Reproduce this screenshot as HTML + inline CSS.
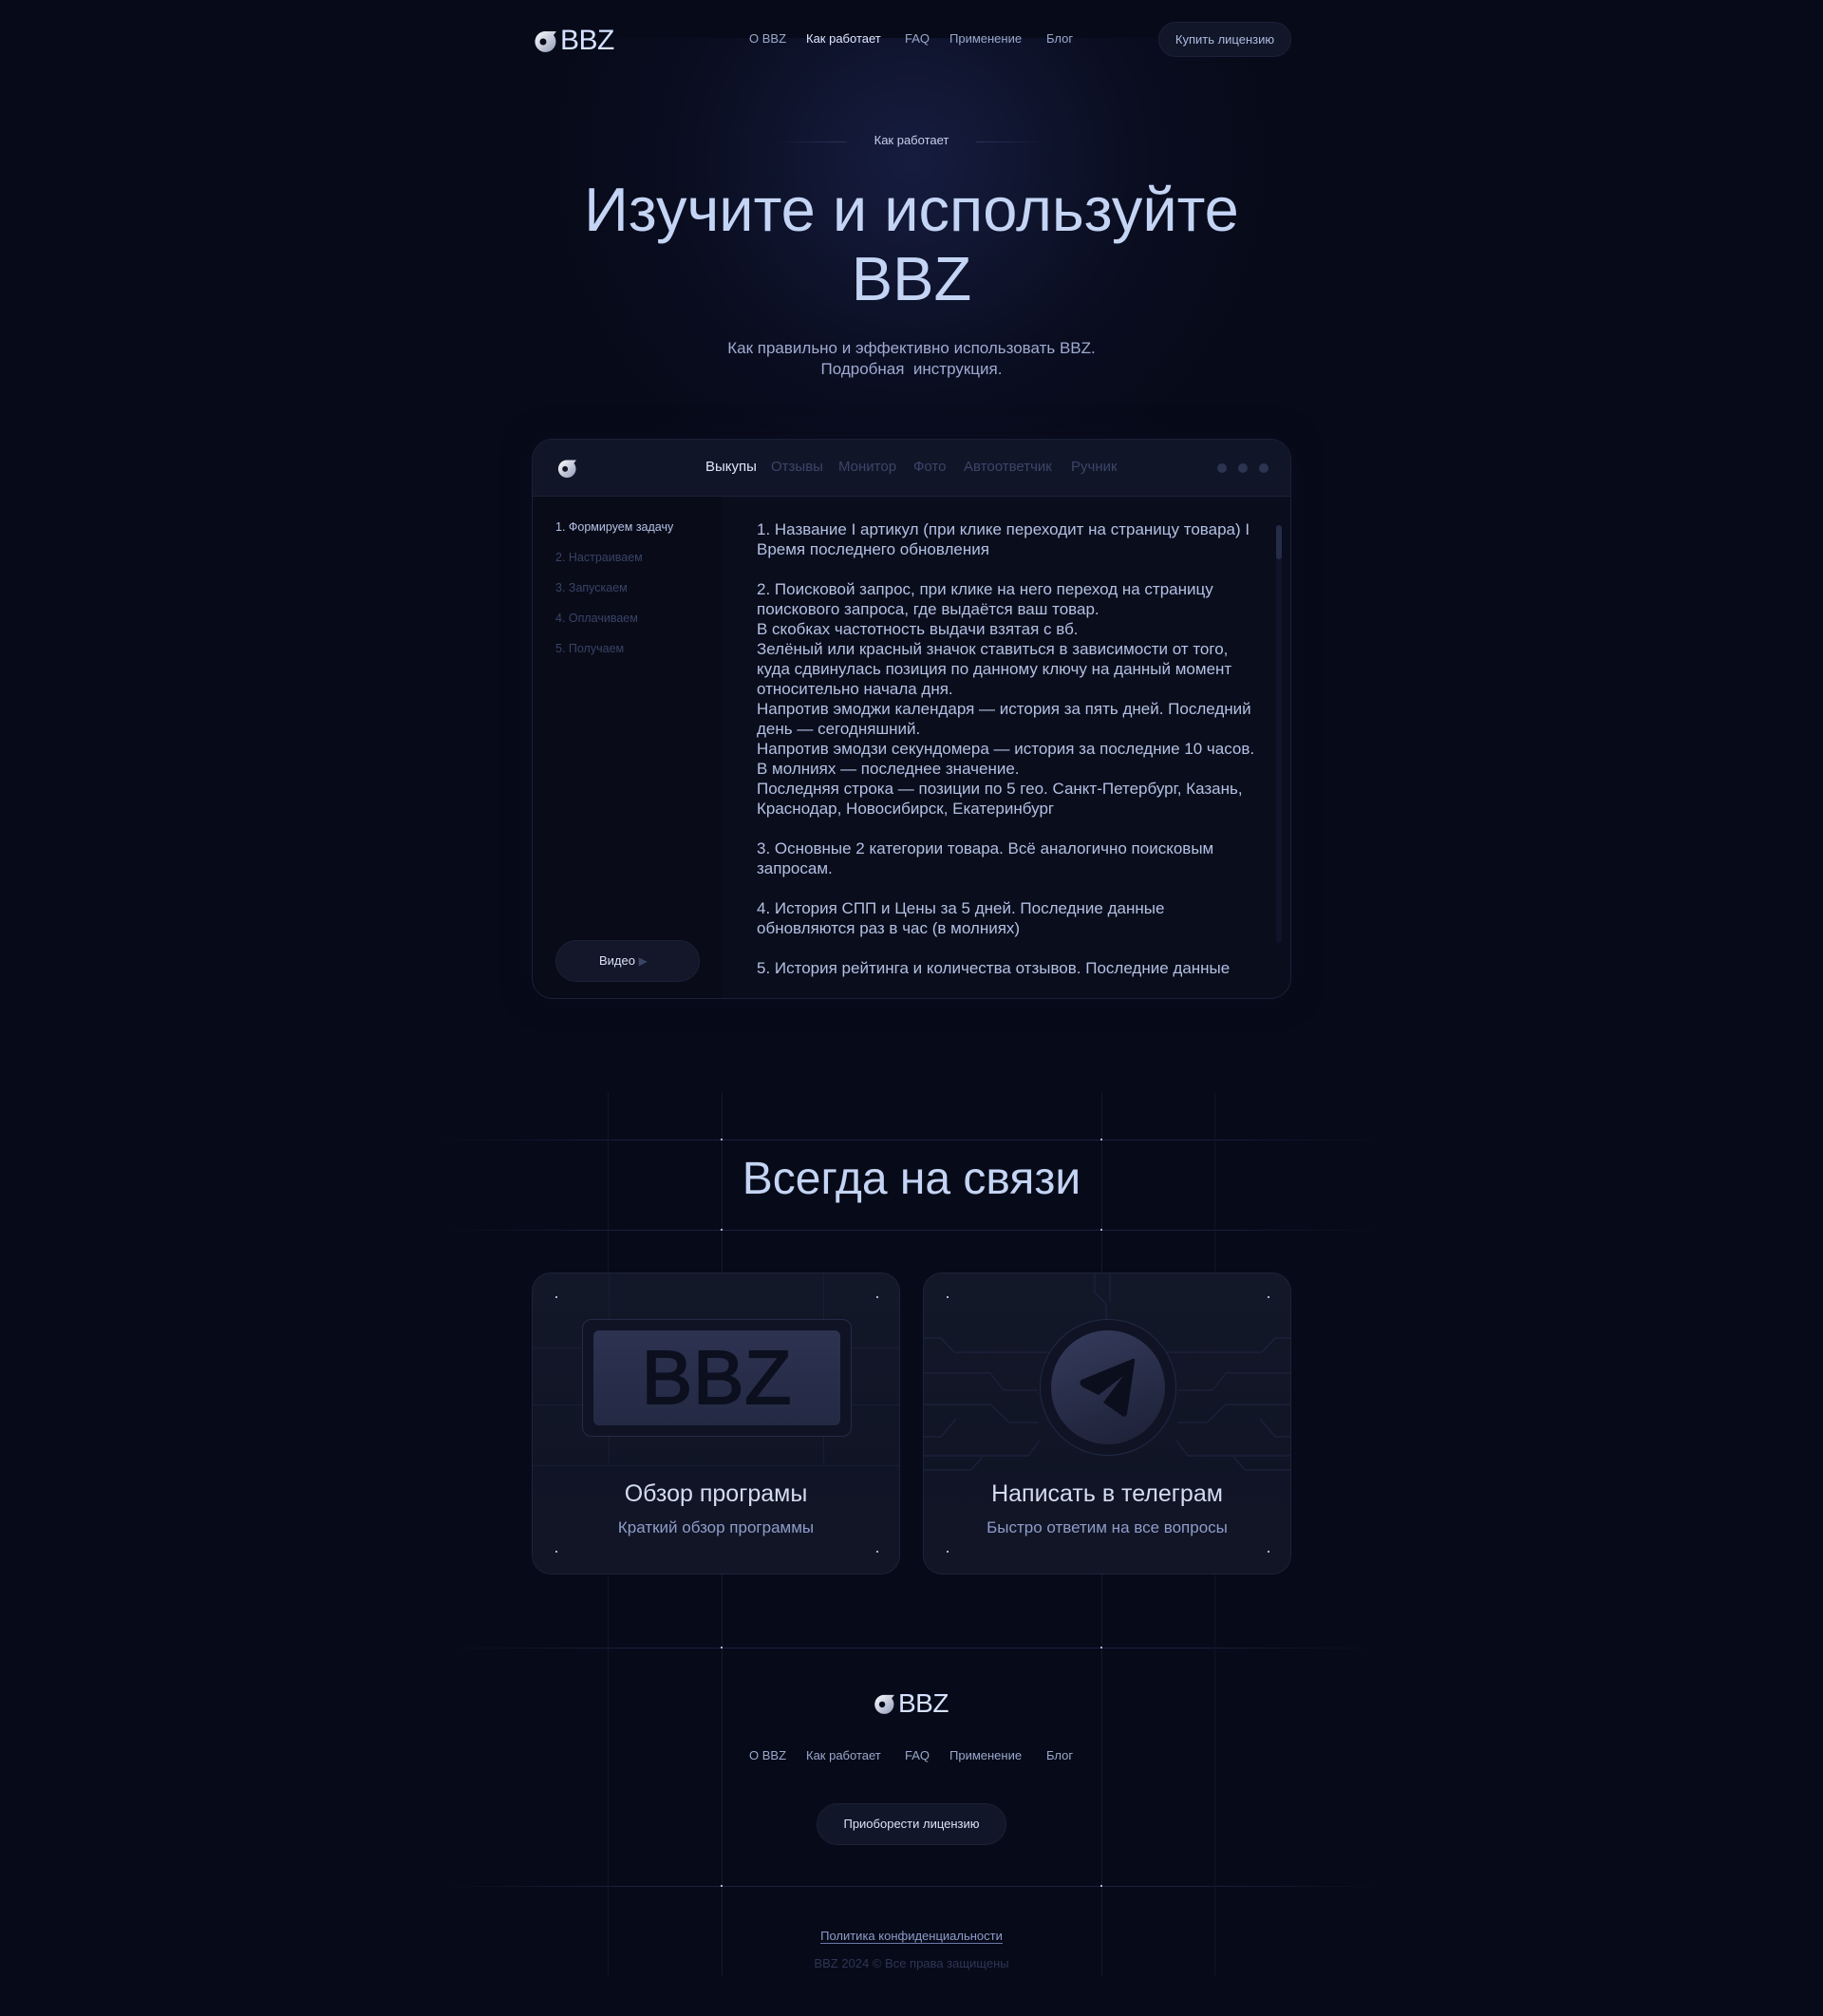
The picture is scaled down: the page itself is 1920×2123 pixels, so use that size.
<!DOCTYPE html>
<html><head><meta charset="utf-8">
<style>
*{margin:0;padding:0;box-sizing:border-box}
html,body{width:1920px;height:2123px;overflow:hidden}
body{background:#070a18;font-family:"Liberation Sans",sans-serif;position:relative;color:#c6d3f0}
.a{position:absolute}
.glow{left:560px;top:40px;width:800px;height:520px;background:radial-gradient(ellipse at 50% 25%,rgba(40,50,110,.45),rgba(20,25,60,.2) 45%,transparent 70%)}
.nav{font-size:13px;color:#9aa8cc;top:33px}
.logo{display:flex;align-items:center;gap:4px}
.logo span{font-size:30px;color:#d6e2ff;letter-spacing:-0.5px}
.hl{height:1px;background:#1a2140}
.vl{width:1px;background:#141a33}
.dot{width:2px;height:2px;background:#aab4d0}
.win{left:560px;top:462px;width:800px;height:590px;border-radius:22px;background:#0a0d1c;border:1px solid #1b2036;overflow:hidden;box-shadow:0 0 30px rgba(10,14,34,.6)}
.wh{height:60px;background:#111528;border-bottom:1px solid #1c2138}
.side{top:60px;left:0;width:200px;bottom:0;background:#090b18}
.txt{left:236px;top:84px;width:532px;font-size:17px;line-height:21px;color:#b2c0e2}
.card{width:388px;height:318px;border-radius:20px;background:linear-gradient(#131829,#0f1324);border:1px solid #1c2238;overflow:hidden}
.ct{font-size:25px;color:#d4dcf2;width:100%;text-align:center}
.cs{font-size:17px;color:#8e9cc8;width:100%;text-align:center}
.cl{position:absolute;height:1px;background:#1c2340}
</style></head><body>
<div class="a glow"></div>

<div class="a logo" style="left:560px;top:26px">
<svg width="26" height="24" viewBox="0 0 26 24"><defs><linearGradient id="g" x1="0" y1="0" x2="1" y2="1"><stop offset="0" stop-color="#ffffff"/><stop offset="1" stop-color="#8f9ab8"/></linearGradient></defs><path d="M13 2H26L23 6A11 11 0 1 1 13 2Z" fill="url(#g)"/><circle cx="12" cy="13" r="3.5" fill="#070a18"/></svg>
<span>BBZ</span></div>
<div class="a nav" style="left:789px">О BBZ</div>
<div class="a nav" style="left:849px;color:#e0e8ff">Как работает</div>
<div class="a nav" style="left:953px">FAQ</div>
<div class="a nav" style="left:1000px">Применение</div>
<div class="a nav" style="left:1102px">Блог</div>
<div class="a" style="left:1220px;top:23px;width:140px;height:37px;border-radius:19px;background:#111628;border:1px solid #1b2138;font-size:13px;color:#aebbe0;text-align:center;line-height:35px">Купить лицензию</div>

<div class="a hl" style="left:815px;top:149px;width:77px;background:linear-gradient(90deg,transparent,#2a3358)"></div>
<div class="a hl" style="left:1028px;top:149px;width:75px;background:linear-gradient(90deg,#2a3358,transparent)"></div>
<div class="a" style="left:860px;top:140px;width:200px;text-align:center;font-size:13px;color:#c6d0ea">Как работает</div>
<div class="a" style="left:460px;top:184px;width:1000px;text-align:center;font-size:65px;line-height:73px;color:#c4d4f4;font-weight:300">Изучите и используйте<br>BBZ</div>
<div class="a" style="left:560px;top:356px;width:800px;text-align:center;font-size:17px;line-height:22px;color:#9eaad0">Как правильно и эффективно использовать BBZ.<br>Подробная&nbsp; инструкция.</div>

<div class="a win">
<div class="wh"></div>
<svg class="a" style="left:24px;top:19px" width="22" height="22" viewBox="0 0 26 24"><path d="M13 2H26L23 6A11 11 0 1 1 13 2Z" fill="url(#g)"/><circle cx="12" cy="13" r="3.5" fill="#111528"/></svg>
<div class="a" style="left:182px;top:20px;font-size:15px;color:#dfe6fa">Выкупы</div>
<div class="a" style="left:251px;top:20px;font-size:15px;color:#3b4568">Отзывы</div>
<div class="a" style="left:322px;top:20px;font-size:15px;color:#3b4568">Монитор</div>
<div class="a" style="left:401px;top:20px;font-size:15px;color:#3b4568">Фото</div>
<div class="a" style="left:454px;top:20px;font-size:15px;color:#3b4568">Автоответчик</div>
<div class="a" style="left:567px;top:20px;font-size:15px;color:#3b4568">Ручник</div>
<div class="a" style="left:721px;top:25px;width:10px;height:10px;border-radius:50%;background:#2c3452"></div>
<div class="a" style="left:743px;top:25px;width:10px;height:10px;border-radius:50%;background:#2c3452"></div>
<div class="a" style="left:765px;top:25px;width:10px;height:10px;border-radius:50%;background:#2c3452"></div>
<div class="a side">
<div class="a" style="left:24px;top:25px;font-size:12.5px;color:#b4c2e6">1. Формируем задачу</div>
<div class="a" style="left:24px;top:57px;font-size:12.5px;color:#384366">2. Настраиваем</div>
<div class="a" style="left:24px;top:89px;font-size:12.5px;color:#384366">3. Запускаем</div>
<div class="a" style="left:24px;top:121px;font-size:12.5px;color:#384366">4. Оплачиваем</div>
<div class="a" style="left:24px;top:153px;font-size:12.5px;color:#384366">5. Получаем</div>
<div class="a" style="left:24px;top:467px;width:152px;height:44px;border-radius:22px;background:#131729;border:1px solid #1b2036;font-size:13px;color:#dbe3f8;line-height:42px;padding-left:45px">Видео <span style="color:#3a4466;font-size:12px">&#9654;</span></div>
</div>
<div class="a txt">1. Название I артикул (при клике переходит на страницу товара) I Время последнего обновления<br><br>2. Поисковой запрос, при клике на него переход на страницу поискового запроса, где выдаётся ваш товар.<br>В скобках частотность выдачи взятая с вб.<br>Зелёный или красный значок ставиться в зависимости от того, куда сдвинулась позиция по данному ключу на данный момент относительно начала дня.<br>Напротив эмоджи календаря — история за пять дней. Последний день — сегодняшний.<br>Напротив эмодзи секундомера — история за последние 10 часов. В молниях — последнее значение.<br>Последняя строка — позиции по 5 гео. Санкт-Петербург, Казань, Краснодар, Новосибирск, Екатеринбург<br><br>3. Основные 2 категории товара. Всё аналогично поисковым запросам.<br><br>4. История СПП и Цены за 5 дней. Последние данные обновляются раз в час (в молниях)<br><br>5. История рейтинга и количества отзывов. Последние данные</div>
<div class="a" style="left:783px;top:90px;width:6px;height:440px;border-radius:3px;background:#10142a"></div>
<div class="a" style="left:783px;top:90px;width:6px;height:36px;border-radius:3px;background:#252c48"></div>
</div>

<div class="a hl" style="left:460px;top:1200px;width:1000px;background:linear-gradient(90deg,transparent,#1a2140 20%,#1a2140 80%,transparent)"></div>
<div class="a hl" style="left:460px;top:1295px;width:1000px;background:linear-gradient(90deg,transparent,#1a2140 20%,#1a2140 80%,transparent)"></div>
<div class="a hl" style="left:460px;top:1735px;width:1000px;background:linear-gradient(90deg,transparent,#1a2140 20%,#1a2140 80%,transparent)"></div>
<div class="a hl" style="left:460px;top:1986px;width:1000px;background:linear-gradient(90deg,transparent,#1a2140 20%,#1a2140 80%,transparent)"></div>
<div class="a vl" style="left:760px;top:1150px;height:930px"></div>
<div class="a vl" style="left:1160px;top:1150px;height:930px"></div>
<div class="a vl" style="left:640px;top:1150px;height:930px;background:#10152a"></div>
<div class="a vl" style="left:1279px;top:1150px;height:930px;background:#10152a"></div>
<div class="a dot" style="left:759px;top:1199px"></div><div class="a dot" style="left:1159px;top:1199px"></div>
<div class="a dot" style="left:759px;top:1294px"></div><div class="a dot" style="left:1159px;top:1294px"></div>
<div class="a dot" style="left:759px;top:1734px"></div><div class="a dot" style="left:1159px;top:1734px"></div>
<div class="a dot" style="left:759px;top:1985px"></div><div class="a dot" style="left:1159px;top:1985px"></div>

<div class="a" style="left:560px;top:1214px;width:800px;text-align:center;font-size:48px;color:#c4d4f4;font-weight:300">Всегда на связи</div>

<div class="a card" style="left:560px;top:1340px">
<div class="cl" style="left:0;top:78px;width:388px;background:#181e34"></div>
<div class="cl" style="left:0;top:138px;width:388px;background:#181e34"></div>
<div class="cl" style="left:0;top:202px;width:388px;background:#181e34"></div>
<div class="a" style="left:80px;top:0;width:1px;height:200px;background:#181e34"></div>
<div class="a" style="left:306px;top:0;width:1px;height:200px;background:#181e34"></div>
<div class="a" style="left:52px;top:48px;width:284px;height:124px;border-radius:10px;background:#0f1324;border:1px solid #242b46"></div>
<div class="a" style="left:64px;top:60px;width:260px;height:100px;border-radius:6px;background:linear-gradient(#2c3250,#242a44);font-size:80px;color:#0c0f1e;text-align:center;line-height:100px;letter-spacing:1px;-webkit-text-stroke:2px #0c0f1e">BBZ</div>
<div class="a" style="left:0;top:200px;width:388px;height:118px;background:linear-gradient(rgba(15,19,36,0),#111526 40%)"></div>
<div class="a ct" style="top:218px">Обзор програмы</div>
<div class="a cs" style="top:258px">Краткий обзор программы</div>
<div class="a dot" style="left:24px;top:24px"></div><div class="a dot" style="left:362px;top:24px"></div>
<div class="a dot" style="left:24px;top:292px"></div><div class="a dot" style="left:362px;top:292px"></div>
</div>

<div class="a card" style="left:972px;top:1340px">
<svg class="a" style="left:0;top:0" width="388" height="318" viewBox="0 0 388 318" fill="none" stroke="#1e2542" stroke-width="1">
<path d="M0 68H18L32 83H140"/><path d="M0 105H70L84 123H120"/><path d="M0 138H70L90 157H120"/><path d="M0 172H18L34 153"/><path d="M0 192H110L122 176"/><path d="M0 207H50L62 193"/>
<path d="M388 68H370L356 83H250"/><path d="M388 105H318L304 123H268"/><path d="M388 138H318L298 157H268"/><path d="M388 172H370L354 153"/><path d="M388 192H278L266 176"/><path d="M388 207H338L326 193"/>
<path d="M180 0V20L192 32V48"/><path d="M196 0V30"/>
</svg>
<div class="a" style="left:122px;top:48px;width:144px;height:144px;border-radius:50%;background:#0f1324;border:1px solid #222a46"></div>
<div class="a" style="left:134px;top:60px;width:120px;height:120px;border-radius:50%;background:linear-gradient(160deg,#353b5c,#1c2036)"></div>
<svg class="a" style="left:154px;top:80px" width="80" height="80" viewBox="0 0 80 80"><path d="M12 32 L66 10 Q69 9 68 13 L60 68 Q59 72 55 70 L35 56 L56 28 L30 48 L14 40 Q8 36 12 32Z" fill="#0b0e1c"/></svg>
<div class="a" style="left:0;top:210px;width:388px;height:108px;background:linear-gradient(rgba(15,19,36,0),#111526 40%)"></div>
<div class="a ct" style="top:218px">Написать в телеграм</div>
<div class="a cs" style="top:258px">Быстро ответим на все вопросы</div>
<div class="a dot" style="left:24px;top:24px"></div><div class="a dot" style="left:362px;top:24px"></div>
<div class="a dot" style="left:24px;top:292px"></div><div class="a dot" style="left:362px;top:292px"></div>
</div>

<div class="a logo" style="left:918px;top:1778px">
<svg width="24" height="22" viewBox="0 0 26 24"><path d="M13 2H26L23 6A11 11 0 1 1 13 2Z" fill="url(#g)"/><circle cx="12" cy="13" r="3.5" fill="#070a18"/></svg>
<span style="font-size:28px">BBZ</span></div>
<div class="a nav" style="left:789px;top:1841px">О BBZ</div>
<div class="a nav" style="left:849px;top:1841px">Как работает</div>
<div class="a nav" style="left:953px;top:1841px">FAQ</div>
<div class="a nav" style="left:1000px;top:1841px">Применение</div>
<div class="a nav" style="left:1102px;top:1841px">Блог</div>
<div class="a" style="left:860px;top:1899px;width:200px;height:44px;border-radius:22px;background:#111628;border:1px solid #1b2138;font-size:13px;color:#dbe3f8;text-align:center;line-height:42px">Приоборести лицензию</div>
<div class="a" style="left:760px;top:2031px;width:400px;text-align:center;font-size:13px;color:#8e9cc8"><span style="border-bottom:1px solid #6a78a8">Политика конфиденциальности</span></div>
<div class="a" style="left:760px;top:2060px;width:400px;text-align:center;font-size:13px;color:#2d3656">BBZ 2024 © Все права защищены</div>
</body></html>
